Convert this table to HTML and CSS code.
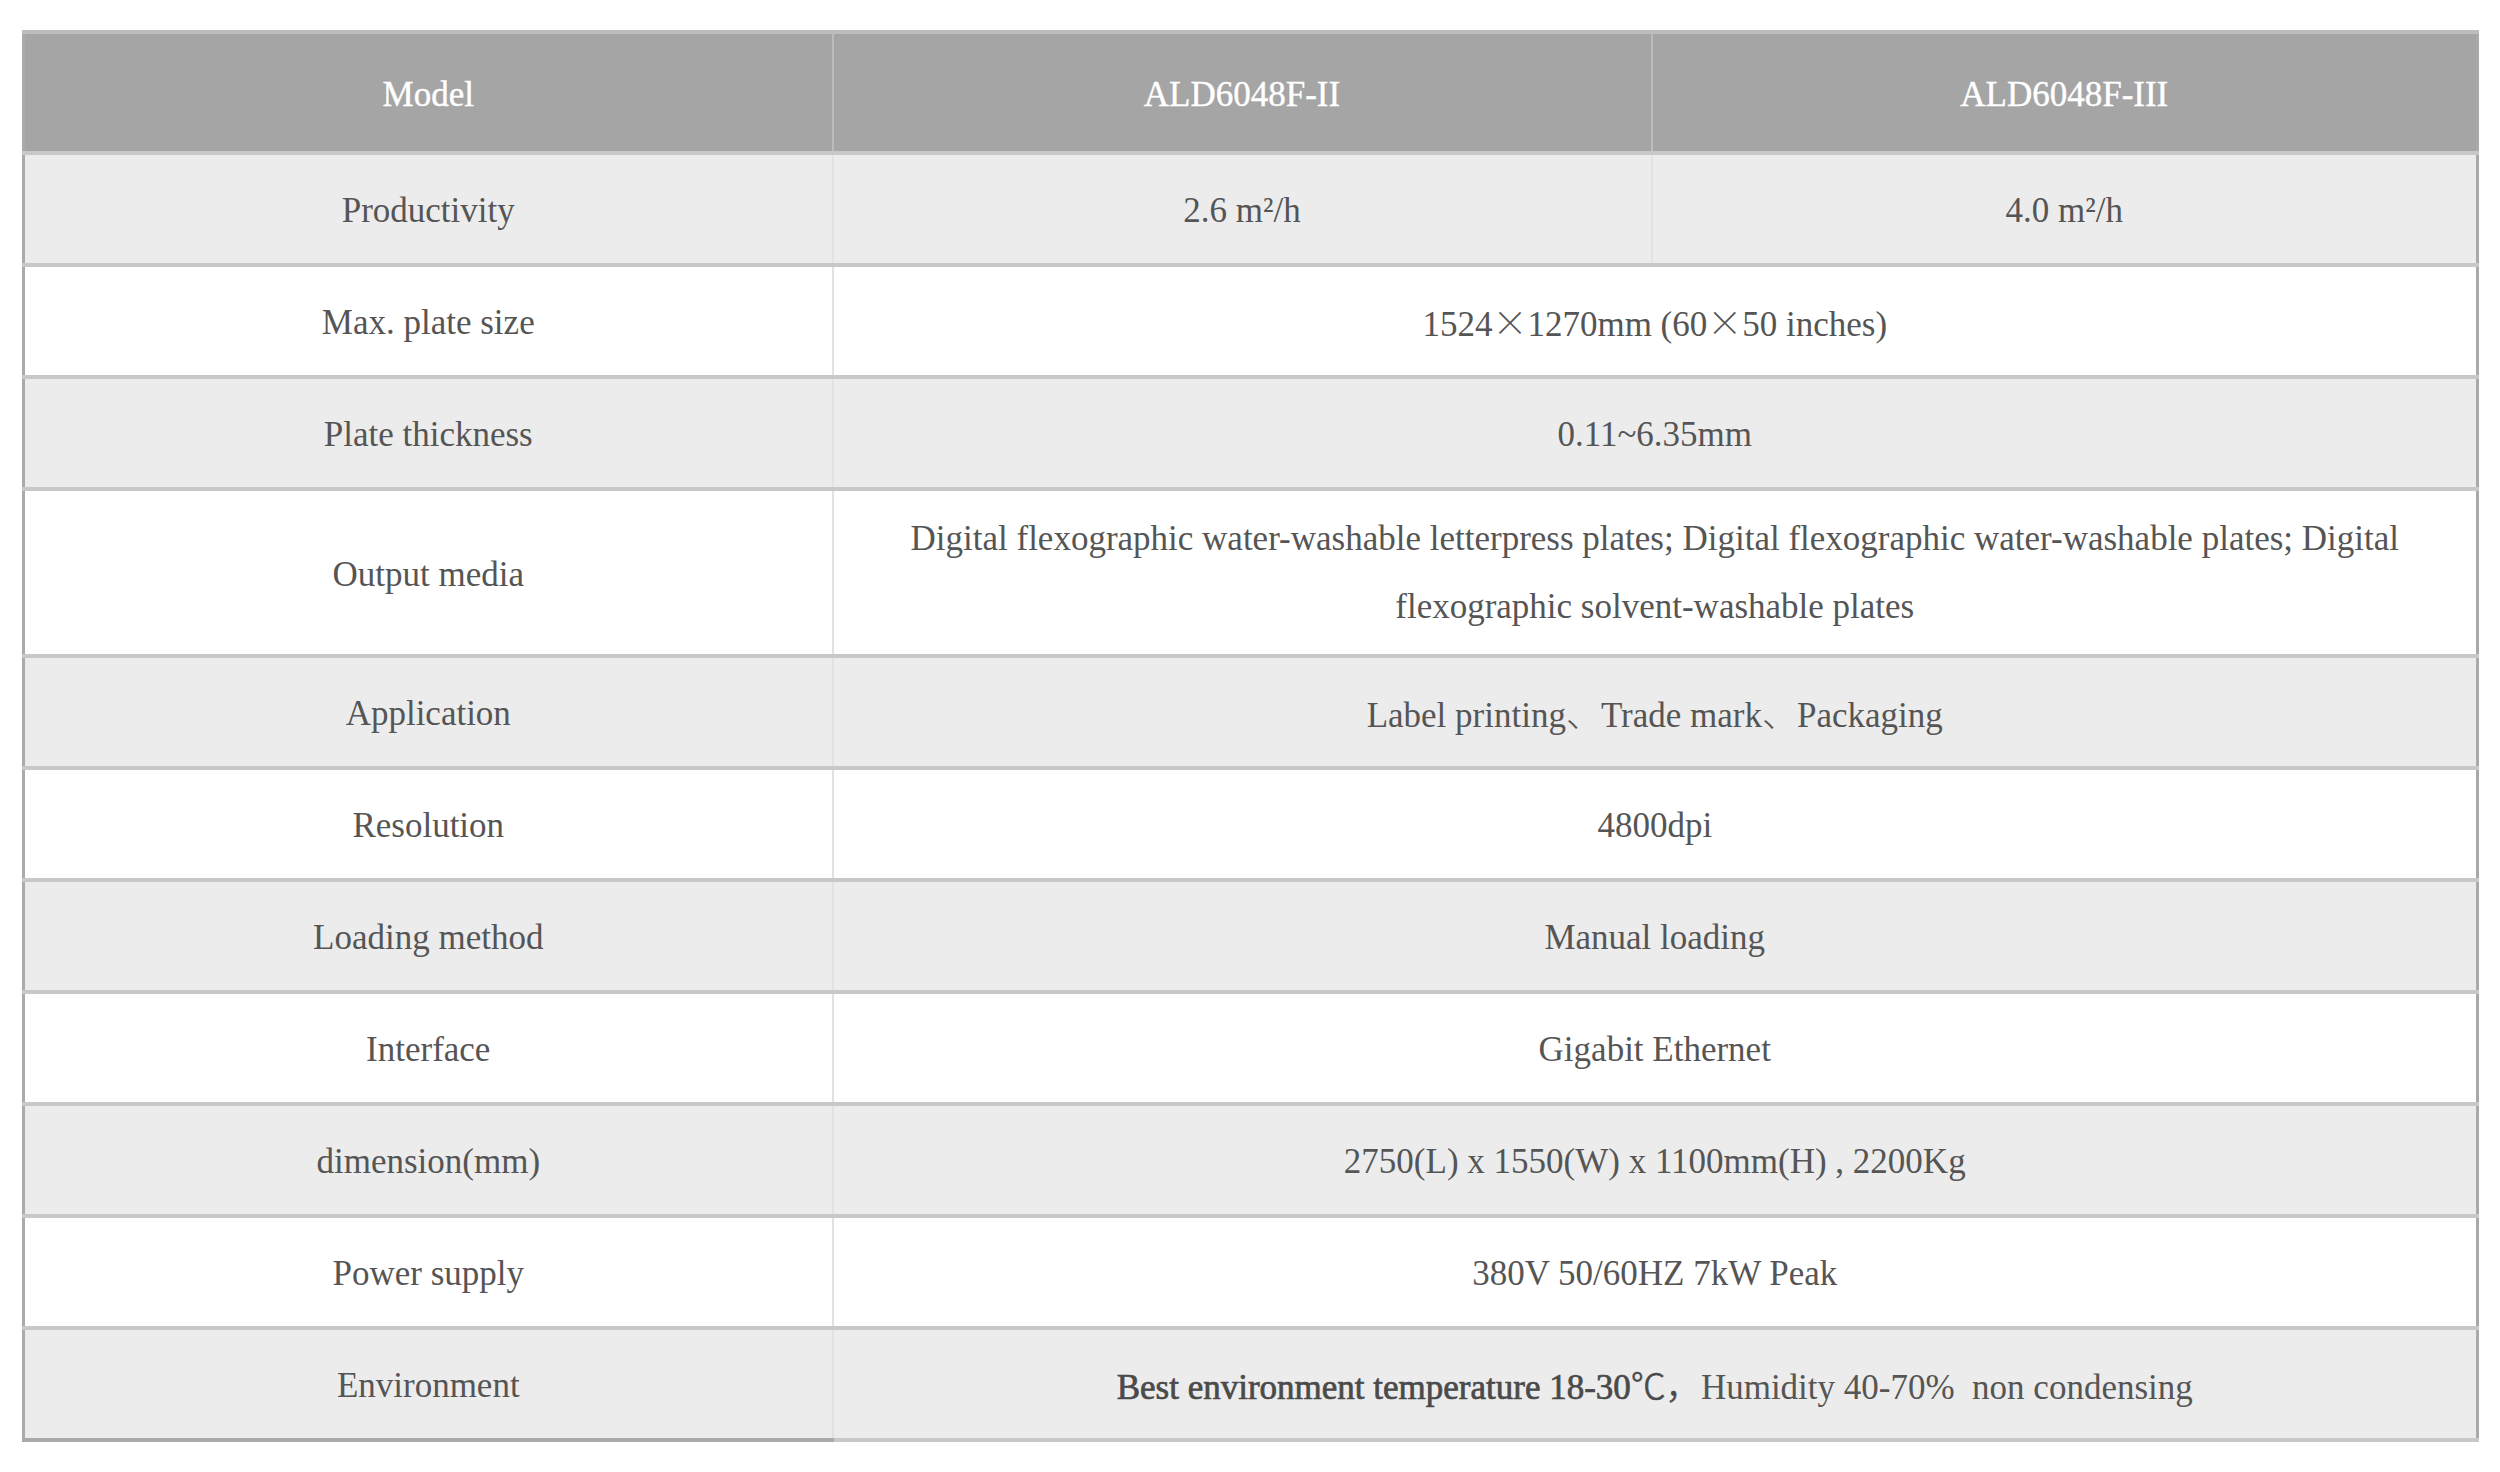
FILE: index.html
```html
<!DOCTYPE html>
<html lang="en">
<head>
<meta charset="utf-8">
<title>ALD6048F Specifications</title>
<link rel="stylesheet" href="styles.css">
</head>
<body>
<div class="wrap">
<table class="spec">
  <colgroup>
    <col class="c1">
    <col class="c2">
    <col class="c3">
  </colgroup>
  <thead>
    <tr class="head">
      <th>Model</th>
      <th>ALD6048F-II</th>
      <th>ALD6048F-III</th>
    </tr>
  </thead>
  <tbody>
    <tr class="odd"><td>Productivity</td><td>2.6 m²/h</td><td>4.0 m²/h</td></tr>
    <tr class="even"><td>Max. plate size</td><td colspan="2">1524<span class="cjk">×</span>1270mm (60<span class="cjk">×</span>50 inches)</td></tr>
    <tr class="odd"><td>Plate thickness</td><td colspan="2">0.11~6.35mm</td></tr>
    <tr class="even tall"><td>Output media</td><td colspan="2" class="wide">Digital flexographic water-washable letterpress plates; Digital flexographic water-washable plates; Digital flexographic solvent-washable plates</td></tr>
    <tr class="odd"><td>Application</td><td colspan="2">Label printing<span class="cjk">、</span>Trade mark<span class="cjk">、</span>Packaging</td></tr>
    <tr class="even"><td>Resolution</td><td colspan="2">4800dpi</td></tr>
    <tr class="odd"><td>Loading method</td><td colspan="2">Manual loading</td></tr>
    <tr class="even"><td>Interface</td><td colspan="2">Gigabit Ethernet</td></tr>
    <tr class="odd"><td>dimension(mm)</td><td colspan="2">2750(L) x 1550(W) x 1100mm(H) , 2200Kg</td></tr>
    <tr class="even"><td>Power supply</td><td colspan="2">380V 50/60HZ 7kW Peak</td></tr>
    <tr class="odd last"><td>Environment</td><td colspan="2"><strong>Best environment temperature 18-30<span class="cjk">℃，</span></strong>Humidity 40-70%&nbsp; non condensing</td></tr>
  </tbody>
</table>
</div>
</body>
</html>
```
FILE: styles.css
```css
html, body {
  margin: 0;
  padding: 0;
  background: #ffffff;
}

.wrap {
  padding: 30px 0 0 22px;
}

.spec {
  width: 2454px;
  border-collapse: collapse;
  table-layout: fixed;
  font-family: "Liberation Serif", "Noto Sans CJK SC", serif;
  font-size: 35px;
  color: #555555;
  border-left: 3px solid #aaaaaa;
  border-right: 3px solid #aaaaaa;
}

.c1 { width: 809px; }
.c2 { width: 819px; }
.c3 { width: 826px; }

.cjk {
  font-family: "Noto Sans CJK SC", sans-serif;
  font-weight: 300;
}

.spec th,
.spec td {
  text-align: center;
  vertical-align: middle;
  padding: 4px 40px 0;
  line-height: 68px;
}

.head th {
  height: 121px;
  background: #a5a5a5;
  color: #ffffff;
  font-weight: normal;
  -webkit-text-stroke: 0.4px #ffffff;
  border-top: 4px solid #bdbdbd;
  border-left: 2px solid #bcbcbc;
  box-sizing: border-box;
}

.head th:first-child {
  border-left: none;
}

.spec tbody tr td {
  height: 104px;
  border-top: 4px solid #c8c8c8;
}

.spec tbody tr td + td {
  border-left: 2px solid #e2e2e2;
}

.odd td {
  background: #ececec;
}

.even td {
  background: #ffffff;
}

.spec tbody tr.tall td {
  height: 159px;
}

.spec tbody tr td.wide {
  padding: 0 60px;
}

.last td {
  border-bottom: 4px solid #c8c8c8;
}

.last td:first-child {
  border-bottom-color: #aaaaaa;
}

strong {
  font-weight: normal;
  color: #4a4a4a;
  -webkit-text-stroke: 0.7px #4a4a4a;
}
```
